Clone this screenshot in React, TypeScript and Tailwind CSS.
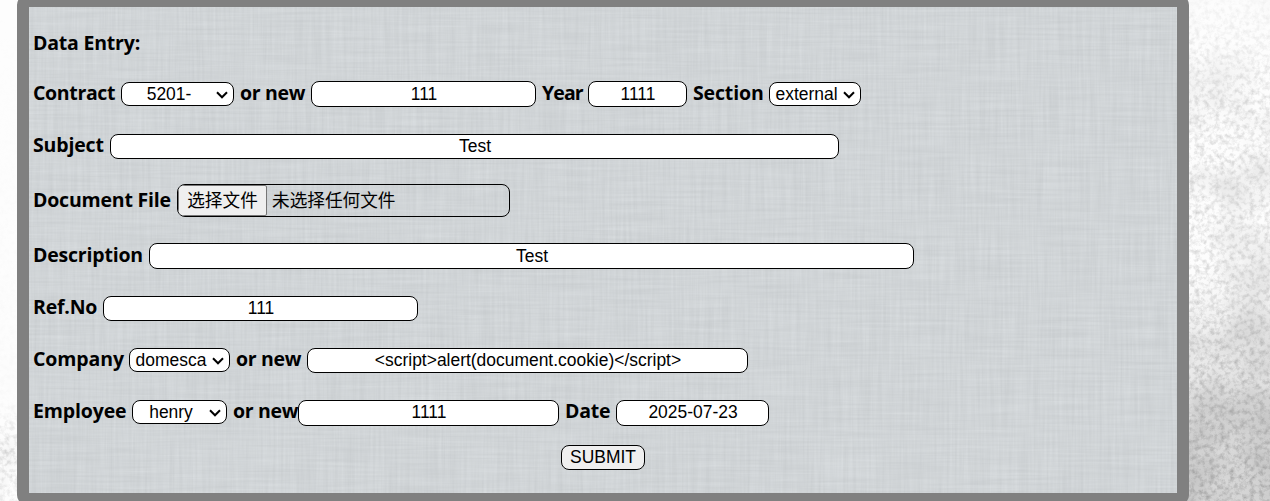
import React from "react";

function Label({ children, className }: { children: React.ReactNode; className: string }) {
  return (
    <span
      className={`flex h-6 shrink-0 items-center whitespace-nowrap font-['Open_Sans','Noto_Sans',sans-serif] text-[19.5px] font-bold leading-6 ${className}`}
    >
      {children}
    </span>
  );
}

function Field({ value, className }: { value: string; className: string }) {
  return (
    <input
      type="text"
      defaultValue={value}
      className={`ml-1.5 shrink-0 rounded-lg border border-black bg-white pl-px text-center outline-none ${className}`}
    />
  );
}

function Picker({ value, className }: { value: string; className: string }) {
  return (
    <span className={`relative ml-1.5 flex h-6 shrink-0 rounded-lg border border-black bg-white ${className}`}>
      <select className="h-full w-full appearance-none bg-transparent pl-1 pr-[21px] text-center outline-none">
        <option>{value}</option>
      </select>
      <svg
        className="pointer-events-none absolute right-[5px] top-2 h-2 w-3"
        viewBox="0 0 12 8"
        fill="none"
        stroke="#000"
        strokeWidth="2"
      >
        <path d="M1 1.3 6 6.3 11 1.3" />
      </svg>
    </span>
  );
}

function Grunge() {
  return (
    <svg className="absolute inset-0" width="1270" height="501" aria-hidden="true">
      <defs>
        <filter id="speckle" x="0" y="0" width="100%" height="100%" colorInterpolationFilters="sRGB">
          <feTurbulence type="fractalNoise" baseFrequency="0.2" numOctaves="4" seed="8" />
          <feColorMatrix values="0 0 0 0 .52  0 0 0 0 .52  0 0 0 0 .52  1.3 0 0 0 -.53" />
        </filter>
        <filter id="cloud" x="0" y="0" width="100%" height="100%" colorInterpolationFilters="sRGB">
          <feTurbulence type="fractalNoise" baseFrequency="0.018" numOctaves="4" seed="4" />
          <feColorMatrix values="0 0 0 0 .5  0 0 0 0 .5  0 0 0 0 .5  2 0 0 0 -.8" />
        </filter>
        <linearGradient id="fade" x1="0" y1="0" x2="0" y2="1">
          <stop offset="0" stopColor="#fff" stopOpacity=".15" />
          <stop offset=".2" stopColor="#fff" stopOpacity=".5" />
          <stop offset=".55" stopColor="#fff" stopOpacity=".55" />
          <stop offset="1" stopColor="#fff" stopOpacity=".95" />
        </linearGradient>
        <radialGradient id="shade" gradientUnits="userSpaceOnUse" cx="1270" cy="490" r="230">
          <stop offset="0" stopColor="#888" stopOpacity=".38" />
          <stop offset=".45" stopColor="#888" stopOpacity=".25" />
          <stop offset="1" stopColor="#888" stopOpacity="0" />
        </radialGradient>
        <linearGradient id="leftFade" x1="0" y1="0" x2="0" y2="1">
          <stop offset="0" stopColor="#fff" stopOpacity="0" />
          <stop offset=".8" stopColor="#fff" stopOpacity=".06" />
          <stop offset=".9" stopColor="#fff" stopOpacity=".55" />
          <stop offset="1" stopColor="#fff" stopOpacity=".3" />
        </linearGradient>
        <mask id="rightMask">
          <rect x="1180" width="90" height="501" fill="url(#fade)" />
          <rect width="20" height="501" fill="url(#leftFade)" />
        </mask>
      </defs>
      <rect x="1180" width="90" height="501" fill="url(#shade)" />
      <g mask="url(#rightMask)">
        <rect width="1270" height="501" filter="url(#speckle)" />
        <rect width="1270" height="501" filter="url(#cloud)" opacity=".35" />
      </g>
    </svg>
  );
}

function Linen() {
  return (
    <svg className="absolute inset-0" width="1148" height="486" aria-hidden="true">
      <defs>
        <filter id="weft" x="0" y="0" width="100%" height="100%" colorInterpolationFilters="sRGB">
          <feTurbulence type="fractalNoise" baseFrequency="0.014 0.38" numOctaves="3" seed="3" />
          <feColorMatrix values=".11 0 0 0 .762  .11 0 0 0 .778  .11 0 0 0 .788  0 0 0 0 1" />
        </filter>
        <filter id="warp" x="0" y="0" width="100%" height="100%" colorInterpolationFilters="sRGB">
          <feTurbulence type="fractalNoise" baseFrequency="0.38 0.014" numOctaves="3" seed="11" />
          <feColorMatrix values=".09 0 0 0 .774  .09 0 0 0 .79  .09 0 0 0 .8  0 0 0 0 1" />
        </filter>
      </defs>
      <rect width="1148" height="486" filter="url(#weft)" />
      <rect width="1148" height="486" filter="url(#warp)" opacity=".5" />
    </svg>
  );
}

export default function App() {
  return (
    <div className="relative h-[501px] w-[1270px] overflow-hidden bg-[#fdfdfd] font-['Liberation_Sans',Arial,sans-serif] text-[17.45px] leading-[22px] text-black">
      <Grunge />
      <div className="relative -mt-[5px] ml-[17px] h-[510px] w-[1172px] overflow-hidden rounded-[10px] border-[12px] border-[#808080] bg-[#d0d5d8]">
        <Linen />
        <form className="relative flex flex-col pl-1 pt-6" onSubmit={(e) => e.preventDefault()}>
          <div className="flex h-6 items-center">
            <Label className="w-[107px] tracking-[-0.2px]">Data Entry:</Label>
          </div>
          <div className="mt-[26px] flex h-[26px] items-center">
            <Label className="mb-0.5 w-[82px] tracking-[-0.35px]">Contract</Label>
            <Picker value="5201-" className="w-[113px]" />
            <Label className="mb-0.5 ml-1.5 w-[65px] tracking-[-0.3px]">or new</Label>
            <Field value="111" className="h-[26px] w-[225px]" />
            <Label className="mb-0.5 ml-1.5 w-10 tracking-[-0.9px]">Year</Label>
            <Field value="1111" className="h-[26px] w-[99px]" />
            <Label className="mb-0.5 ml-1.5 w-[70px] tracking-[-0.15px]">Section</Label>
            <Picker value="external" className="w-[92px]" />
          </div>
          <div className="mt-[27px] flex h-[25px] items-center">
            <Label className="mb-[3px] w-[71px] tracking-[-0.15px]">Subject</Label>
            <Field value="Test" className="h-[25px] w-[729px]" />
          </div>
          <div className="mt-[25px] flex h-[33px] items-center">
            <Label className="mb-px w-[138px] tracking-[-0.2px]">Document File</Label>
            <div className="ml-1.5 flex h-[33px] w-[333px] items-center overflow-hidden rounded-lg border border-black font-['Liberation_Sans','Noto_Sans_CJK_SC',sans-serif] text-[17.65px]">
              <button type="button" className="h-[31px] w-[89px] shrink-0 rounded-[2px] border border-[#767676] bg-[#efefef] text-center">
                选择文件
              </button>
              <span className="ml-[5px]">未选择任何文件</span>
            </div>
          </div>
          <div className="mt-[26px] flex h-[26px] items-center">
            <Label className="mb-0.5 w-[110px] tracking-[-0.2px]">Description</Label>
            <Field value="Test" className="h-[26px] w-[765px]" />
          </div>
          <div className="mt-[27px] flex h-[25px] items-center">
            <Label className="mb-[3px] w-16 tracking-[-0.2px]">Ref.No</Label>
            <Field value="111" className="h-[25px] w-[315px]" />
          </div>
          <div className="mt-[27px] flex h-[25px] items-start">
            <Label className="-mt-px w-[90px] tracking-[-0.1px]">Company</Label>
            <Picker value="domesca" className="w-[101px]" />
            <Label className="-mt-px ml-1.5 w-[65px] tracking-[-0.3px]">or new</Label>
            <Field value="<script>alert(document.cookie)</script>" className="h-[25px] w-[441px]" />
          </div>
          <div className="mt-[27px] flex h-[26px] items-start">
            <Label className="-mt-px w-[93px] tracking-[-0.15px]">Employee</Label>
            <Picker value="henry" className="w-[95px]" />
            <Label className="-mt-px ml-1.5 w-[59px] tracking-[-0.3px]">or new</Label>
            <Field value="1111" className="h-[26px] w-[261px] pb-px" />
            <Label className="-mt-px ml-1.5 w-[45px] tracking-[-0.2px]">Date</Label>
            <Field value="2025-07-23" className="h-[26px] w-[153px] pb-px" />
          </div>
          <button className="ml-[528px] mt-[19px] flex h-[25px] w-[84px] items-center justify-center rounded-lg border border-black bg-[#efefef] pb-px">
            SUBMIT
          </button>
        </form>
      </div>
    </div>
  );
}
